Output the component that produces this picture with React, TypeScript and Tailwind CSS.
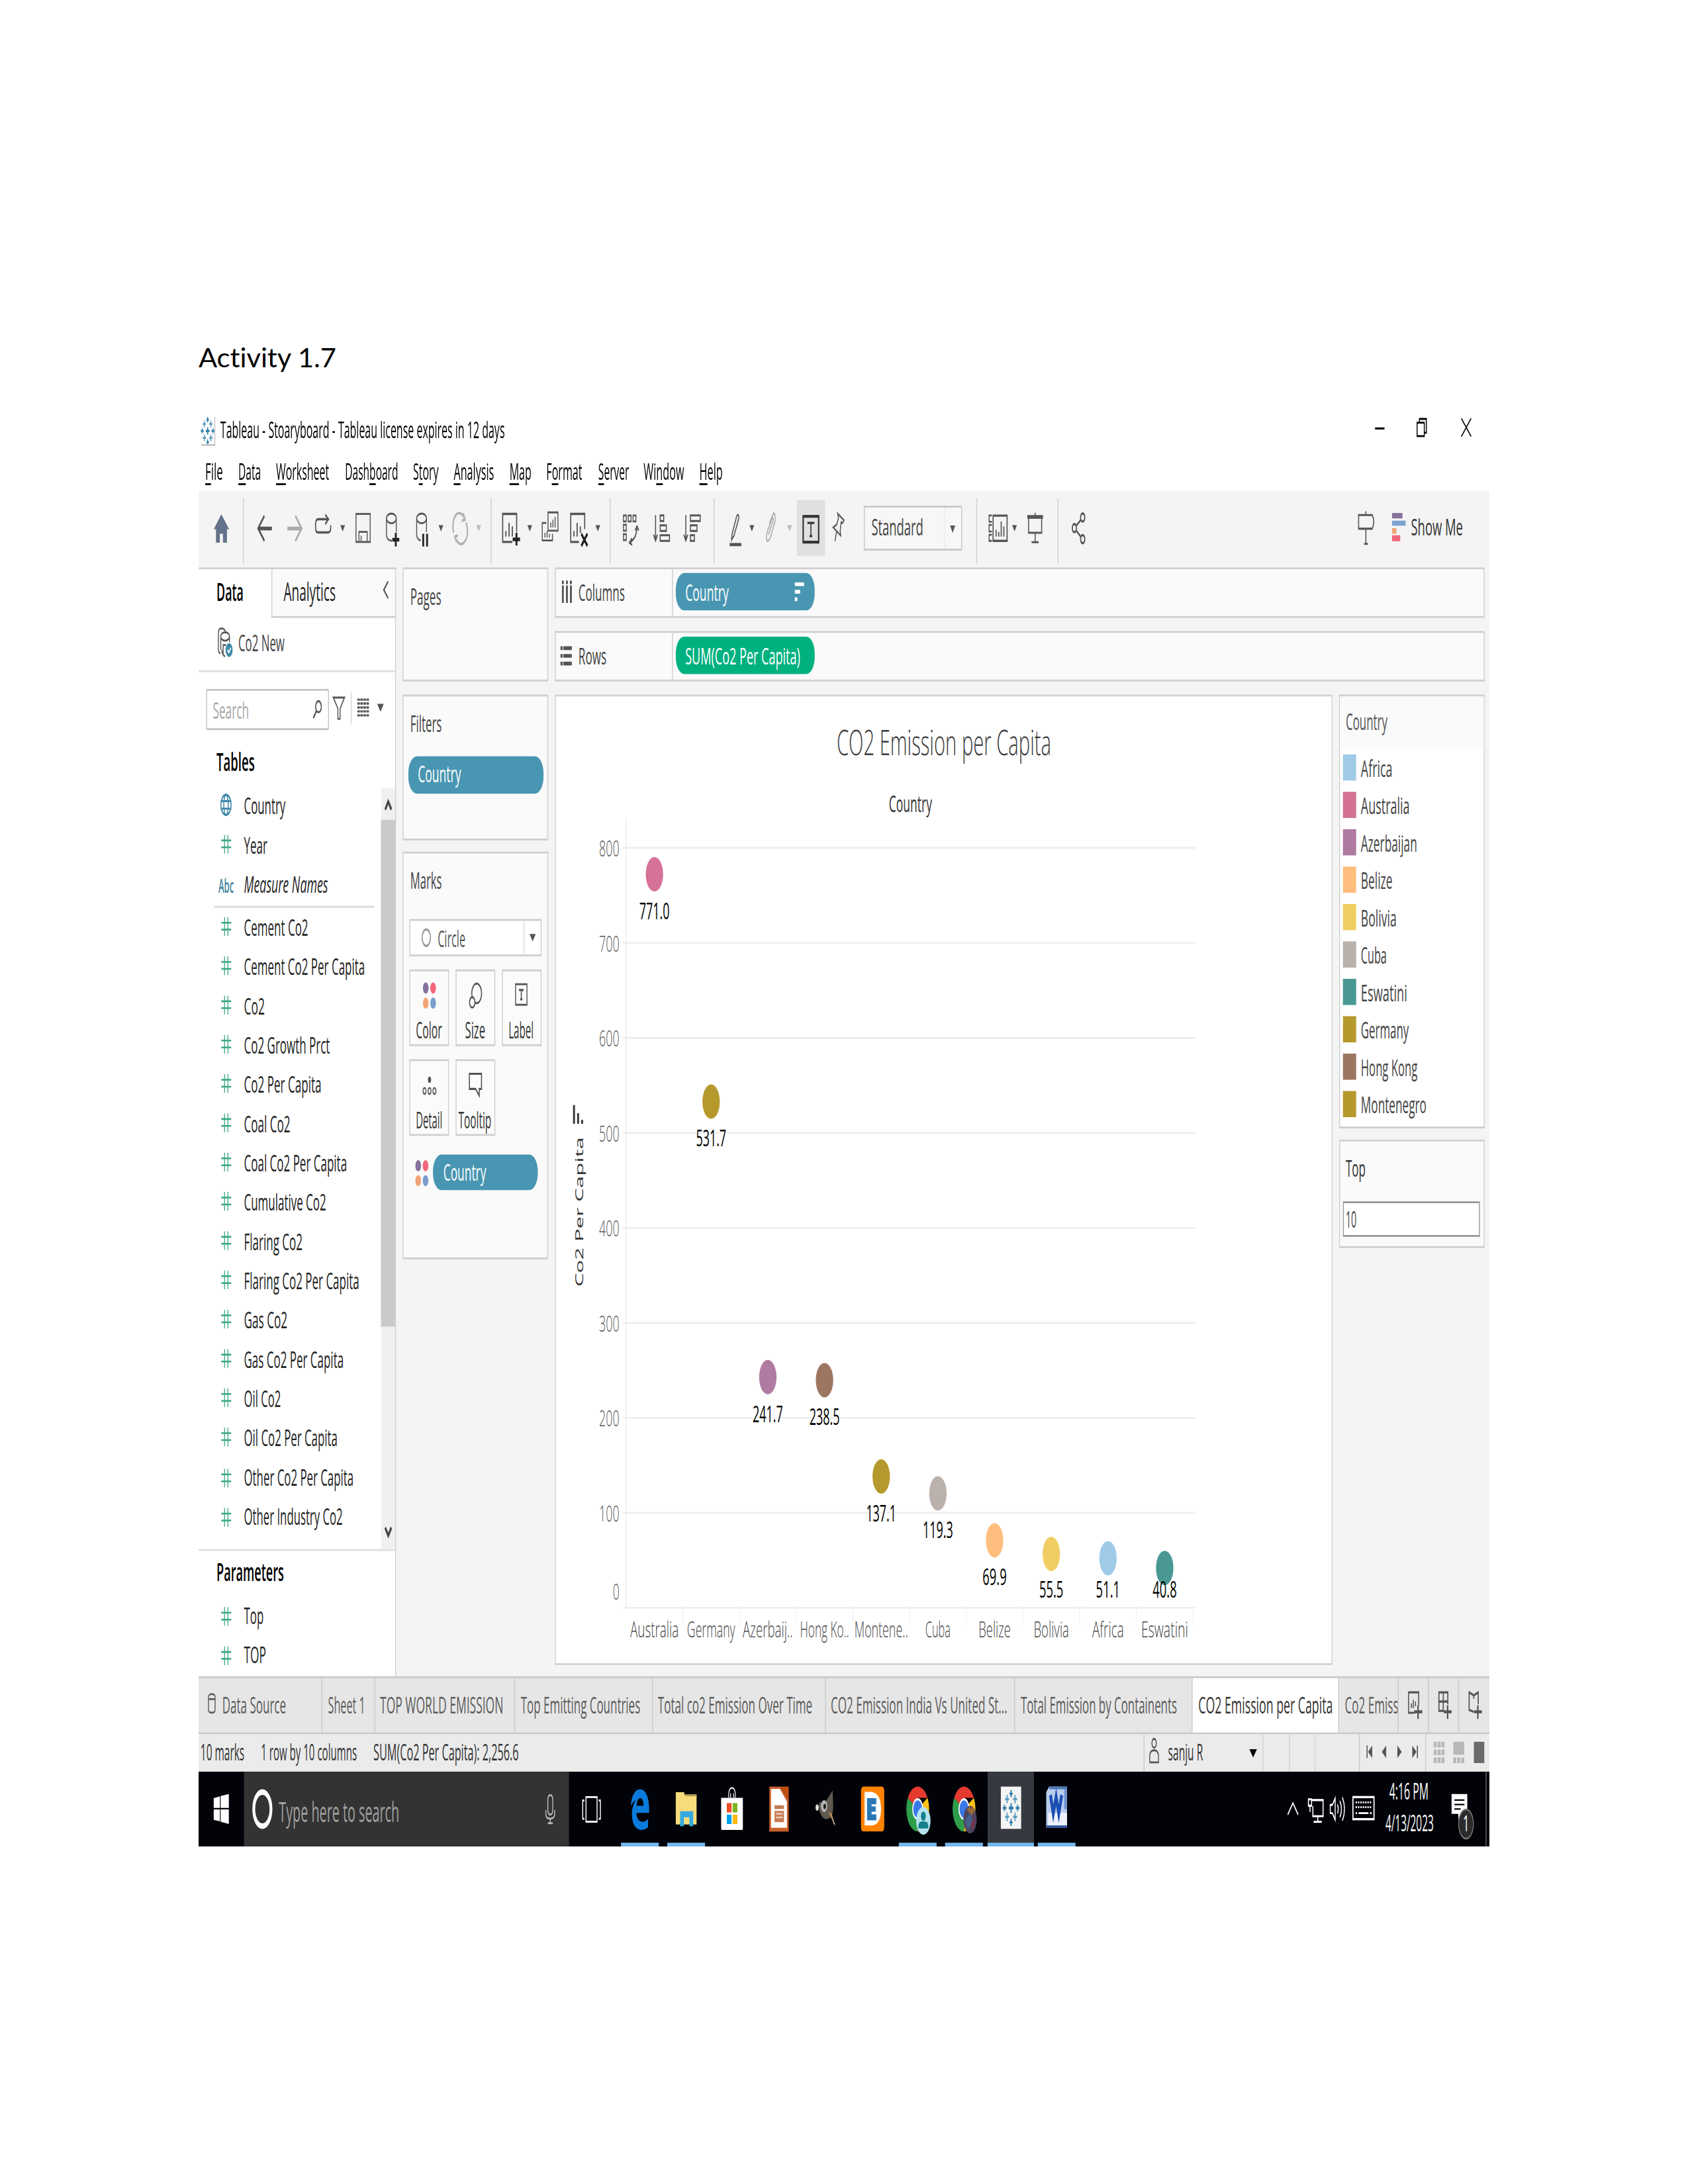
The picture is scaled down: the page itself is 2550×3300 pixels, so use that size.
import React, { useLayoutEffect, useRef, useState, type ReactNode } from "react";

/* Text set to a fixed advance width, condensed or widened to fill it. */
function T({ w, className = "", children }: { w: number; className?: string; children: ReactNode }) {
  const inner = useRef<HTMLSpanElement>(null);
  const [k, setK] = useState(1);
  useLayoutEffect(() => {
    if (inner.current) {
      const natural = parseFloat(getComputedStyle(inner.current).width);
      if (natural > 0) setK(w / natural);
    }
  }, [w]);
  return (
    <span className={`block shrink-0 whitespace-nowrap ${className}`} style={{ width: w }}>
      <span ref={inner} className="inline-block origin-left" style={{ transform: `scaleX(${k})` }}>
        {children}
      </span>
    </span>
  );
}

function Icon({ w, h = 20, className = "", children }: { w: number; h?: number; className?: string; children: ReactNode }) {
  return (
    <svg width={w} height={h} viewBox={`0 0 ${w} ${h}`} fill="none" stroke="currentColor" className={`block shrink-0 overflow-visible ${className}`}>
      {children}
    </svg>
  );
}

function Caret({ className = "" }: { className?: string }) {
  return (
    <Icon w={5} className={className}>
      <path d="M0 7.4H5L2.5 10.8Z" fill="currentColor" stroke="none" />
    </Icon>
  );
}

function Sep({ className = "" }: { className?: string }) {
  return <div className={`-mt-[7.8px] h-[35px] w-px shrink-0 bg-[#d0d0d0] ${className}`} />;
}

function TableauMark() {
  return (
    <g stroke="none">
      <g fill="#2f7fa8">
        <path d="M7 6h1.2v4H7zM5.6 7.4h4v1.2h-4z" />
        <path d="M7 .5h1.1v3H7zM6.2 1.6h2.8v.8H6.2zM7 12.5h1.1v3H7zM6.2 13.6h2.8v.8H6.2zM.3 7.5h3.2v1H.3zM1.4 6.6h.9v2.8h-.9zM11.6 7.5h3.2v1h-3.2zM12.8 6.6h.9v2.8h-.9z" />
      </g>
      <g fill="#5c9dbd">
        <path d="M3.6 2.5h1v3.6h-1zM2.4 3.8h3.4v1H2.4zM10.5 2.5h1v3.6h-1zM9.3 3.8h3.4v1H9.3zM3.6 9.9h1v3.6h-1zM2.4 11.2h3.4v1H2.4zM10.5 9.9h1v3.6h-1zM9.3 11.2h3.4v1H9.3z" />
      </g>
    </g>
  );
}

function TitleBar() {
  return (
    <div className="flex h-[22px] items-start text-[12px] leading-[16px] text-black">
      <Icon w={15.5} h={16} className="ml-[2.3px] mt-[3px]">
        <TableauMark />
        <path d="M15.2 .5V15.5H1" stroke="#bbb" strokeWidth={0.8} />
      </Icon>
      <T w={301} className="ml-[5.6px] mt-[3.2px]">Tableau - Stoaryboard - Tableau license expires in 12 days</T>
      <Icon w={10} h={12} className="ml-[921px] mt-[4px]">
        <path d="M0 5.7H10" stroke="#000" strokeWidth={1.1} />
      </Icon>
      <Icon w={11} h={11} className="ml-[34px] mt-[4px]">
        <path d="M3 2.4V.6H10.3V8H8.3" stroke="#000" />
        <rect x={0.5} y={2.6} width={7.6} height={7.2} stroke="#000" />
      </Icon>
      <Icon w={11} h={11} className="ml-[35.4px] mt-[4px]">
        <path d="M.3 .3L10.7 10M10.7 .3L.3 10" stroke="#000" strokeWidth={0.9} />
      </Icon>
    </div>
  );
}

const MENUS: [string, string, string, number][] = [
  ["", "F", "ile", 18.7],
  ["", "D", "ata", 24],
  ["", "W", "orksheet", 56.1],
  ["Dash", "b", "oard", 56.2],
  ["S", "t", "ory", 27],
  ["", "A", "nalysis", 42.6],
  ["", "M", "ap", 23.2],
  ["F", "o", "rmat", 38],
  ["", "S", "erver", 32.6],
  ["Wi", "n", "dow", 42.8],
  ["", "H", "elp", 24.7],
];

function MenuBar() {
  return (
    <div className="flex h-[20.5px] gap-[16.2px] pl-[7.4px] pt-[2px] text-[12px] leading-[17px] text-black">
      {MENUS.map(([a, u, b, w]) => (
        <T key={a + u + b} w={w}>
          {a}
          <span className="underline decoration-1 underline-offset-[1.5px]">{u}</span>
          {b}
        </T>
      ))}
    </div>
  );
}

function Toolbar() {
  return (
    <div className="flex h-[41.2px] items-start bg-[#f4f4f4] pt-[11.8px] text-[#555]">
      <Icon w={16.3} className="ml-[16.2px]">
        <path d="M8.1 1.6L16.3 9.6H14V16.8H9.8V12H6.5V16.8H2.4V9.6H0Z" fill="#62738a" stroke="none" />
      </Icon>
      <Sep className="ml-[15px]" />
      <Icon w={16} className="ml-[13.2px]">
        <path d="M1 9.2H15.6" strokeWidth={2} />
        <path d="M7.6 2.4L1 9.2L7.6 15.8" strokeWidth={1.5} />
      </Icon>
      <Icon w={16} className="ml-[15.9px] text-[#aaa]">
        <path d="M0 9.2H15" strokeWidth={2} />
        <path d="M8.4 2.4L15 9.2L8.4 15.8" strokeWidth={1.5} />
      </Icon>
      <Icon w={17.5} className="ml-[13.7px]">
        <path d="M14 4.2H3.5Q.8 4.2 .8 7V8.6Q.8 11.3 3.5 11.3H14Q16.8 11.3 16.8 8.6V7.5M11 1.8L14.4 4.2L11 6.8" strokeWidth={1.2} />
      </Icon>
      <Caret className="ml-[9.2px]" />
      <Icon w={16.3} className="ml-[10.8px]">
        <rect x={0.6} y={1.4} width={15} height={15} />
        <path d="M3.7 16V11H12.4V16M6 16V13" />
      </Icon>
      <Icon w={14.5} className="ml-[16.4px]">
        <ellipse cx={6} cy={3.8} rx={5.2} ry={2.6} />
        <path d="M.8 3.8V13Q1.6 15.5 6.5 15.8M11.2 3.8V11" />
        <path d="M10.7 11.5V18.8M7 15.2H14.4" stroke="#222" strokeWidth={2} />
      </Icon>
      <Icon w={13.4} className="ml-[16.6px]">
        <ellipse cx={6} cy={3.8} rx={5.2} ry={2.6} />
        <path d="M.8 3.8V13Q1.6 15.3 5 15.6M11.2 3.8V11" />
        <path d="M7.7 12V18.8M11.8 12V18.8" stroke="#222" strokeWidth={2} />
      </Icon>
      <Caret className="ml-[11.1px]" />
      <Icon w={17} className="ml-[8.5px] text-[#b0b0b0]">
        <path d="M2 11.5A6.7 7 0 0 1 12.5 3M15 6A6.7 7 0 0 1 4.6 15M12 1L14 4.5L10.5 5M5 16.5L3.2 13.5L6.5 13" strokeWidth={1.4} />
      </Icon>
      <Caret className="ml-[9.4px] text-[#bbb]" />
      <Sep className="ml-[10.5px]" />
      <Icon w={19.3} className="ml-[10.3px]">
        <path d="M11 16.4H.8V1.4H15.6V11" strokeWidth={1.2} />
        <path d="M4.2 10.5V13.5M7.6 6.2V13.5M11 8V13.5" strokeWidth={1.3} />
        <path d="M15.4 11.5V18.3M11.4 15H19.2" stroke="#222" strokeWidth={2} />
      </Icon>
      <Caret className="ml-[7.9px]" />
      <Icon w={18} className="ml-[10px]">
        <path d="M6.8 .6H17.3V10.4H6.8ZM5 6.2H.7V15.6H11.5V12" />
        <path d="M9.7 6V8.6M12 4.5V8.6M14.3 3V8.6M3.5 11.5V14M5.8 10.5V14M8.2 12V14" />
      </Icon>
      <Icon w={19} className="ml-[12px]">
        <path d="M9.5 16.4H.8V1.4H15.6V9.5" strokeWidth={1.2} />
        <path d="M4.2 10.5V13.5M7.6 6.2V13.5M11 8V11.5" strokeWidth={1.3} />
        <path d="M12 12L18.5 18.5M18.5 12L12 18.5" stroke="#222" strokeWidth={1.8} />
      </Icon>
      <Caret className="ml-[8px]" />
      <Sep className="ml-[10.5px]" />
      <Icon w={17} className="ml-[12.3px]">
        <path d="M.6 2.2H3.6V5.4H.6ZM5.7 2.2H8.7V5.4H5.7ZM10.8 2.2H13.8V5.4H10.8ZM.6 7.2H3.6V10.4H.6ZM.6 12.2H3.6V15.4H.6Z" />
        <path d="M14.8 8.5Q15 14 8 16.6M13 10.2L14.9 8L16.8 10.2M9.8 14.4L7 16.8L9.8 18" strokeWidth={1.1} />
      </Icon>
      <Icon w={18} className="ml-[15.6px]">
        <path d="M2.6 2V15.5M.5 12.5L2.6 15.7L4.7 12.5M7.5 2.2H11.2V5.2H7.5ZM7.5 7.5H14V10.5H7.5ZM7.5 12.8H17.3V15.8H7.5Z" strokeWidth={1.1} />
      </Icon>
      <Icon w={18.5} className="ml-[13.6px]">
        <path d="M2.6 2V15.5M.5 12.5L2.6 15.7L4.7 12.5M7.5 2.2H17.8V5.2H7.5ZM7.5 7.5H14.5V10.5H7.5ZM7.5 12.8H11.7V15.8H7.5Z" strokeWidth={1.1} />
      </Icon>
      <Sep className="ml-[13.7px]" />
      <Icon w={12.4} className="ml-[15.8px]">
        <path d="M7.6 2.4L2.6 12L2 15.2L4.6 13L9.9 3.4Q9.4 1 7.6 2.4Z" />
        <path d="M0 17.8H12.4" strokeWidth={1.7} />
      </Icon>
      <Caret className="ml-[8.6px]" />
      <Icon w={11} className="ml-[11.8px] text-[#aaa]">
        <path d="M3 12.5L8 5Q8.5 3.5 7.2 3.4L2 10.6Q-.2 15 2 16Q4 16 6 12.5L10.2 5.2Q10.8 1.4 8.5 1L4 6.5" />
      </Icon>
      <Caret className="ml-[12.4px] text-[#bbb]" />
      <div className="-mt-[5.9px] ml-[4.8px] flex h-[29.5px] w-[30.5px] shrink-0 items-center justify-center bg-[#e0e0e0]">
        <Icon w={18} h={15.2} className="text-[#333]">
          <rect x={0.8} y={0.7} width={16.4} height={13.8} strokeWidth={1.5} />
          <path d="M5.3 4.2H12.7M9 4.2V11.3M7.6 11.3H10.4" strokeWidth={1.1} />
        </Icon>
      </div>
      <Icon w={12.4} className="ml-[7.8px]">
        <path d="M5.3 1.2L12 4.8L10.4 6.4L9 5.8L8 10.5L8.6 13L.6 8.6L4.4 7L6.2 3.6ZM4.2 11L2.4 16" />
      </Icon>
      <div className="-mt-[3.2px] ml-[20.3px] flex h-[23.4px] w-[104.6px] shrink-0 items-center border border-[#c8c8c8] bg-[#f7f7f7] pl-[7.4px]">
        <T w={55} className="text-[12px] leading-[17px] text-[#444]">Standard</T>
        <div className="ml-[21.5px] h-full w-px bg-[#ececec]" />
        <Icon w={6} h={20} className="ml-[5.5px]">
          <path d="M.3 8.6H5.7L3 12.6Z" fill="currentColor" stroke="none" />
        </Icon>
      </div>
      <Sep className="ml-[14.7px]" />
      <Icon w={20.3} className="ml-[11.7px]">
        <path d="M4.8 2.3H19.6V15.8H4.8ZM8 10V13.5M10.8 11V13.5M13.4 5.5V13.5M16.2 8V13.5" strokeWidth={1.2} />
        <path d="M3.4 2.2H.6V5.6H3.4M3.4 7.3H.6V10.8H3.4M3.4 12.6H.6V15.8H3.4" />
      </Icon>
      <Caret className="ml-[4.7px]" />
      <Icon w={16.6} className="ml-[11px]">
        <path d="M0 3H16.6" strokeWidth={2} />
        <path d="M1.4 3.6V11.5H15.2V3.6M8.3 .8V3M8.3 11.5V16M4.5 16.5H12" strokeWidth={1.1} />
      </Icon>
      <Sep className="ml-[15.7px]" />
      <Icon w={14.5} className="ml-[14.4px]">
        <circle cx={2.8} cy={9} r={2.2} strokeWidth={1.2} />
        <circle cx={11.6} cy={3.3} r={2.2} strokeWidth={1.2} />
        <circle cx={11.6} cy={14.9} r={2.2} strokeWidth={1.2} />
        <path d="M4.6 7.8L9.8 4.5M4.6 10.3L9.8 13.7" strokeWidth={1.2} />
      </Icon>
      <Icon w={18.2} className="ml-[287.6px]">
        <path d="M.6 2H15Q18.4 5.5 15 9.3H.6ZM8.3 0V2M8.3 9.3V17.4M6.5 17.4H10.5" strokeWidth={1.1} />
      </Icon>
      <Icon w={14.4} className="ml-[18.4px]">
        <g stroke="none">
          <path d="M0 .9H11V3.8H0Z" fill="#85719a" />
          <path d="M0 5H14.4V7.7H0Z" fill="#7ba3d0" />
          <path d="M0 9H4.6V12H0Z" fill="#f4a777" />
          <path d="M0 12.8H8.6V16H0Z" fill="#f3667c" />
        </g>
      </Icon>
      <T w={55} className="-mt-[.4px] ml-[5.8px] text-[12.5px] leading-[18px] text-[#333]">Show Me</T>
    </div>
  );
}

function Hash({ className = "" }: { className?: string }) {
  return (
    <Icon w={10.5} h={10} className={`text-[#3aa882] ${className}`}>
      <path d="M0 3H10.5M0 6.7H10.5" strokeWidth={0.9} />
      <path d="M3.5 0V10M7 0V10" strokeWidth={0.9} />
    </Icon>
  );
}

const FIELDS: [string, number][] = [
  ["Cement Co2", 68],
  ["Cement Co2 Per Capita", 128],
  ["Co2", 22],
  ["Co2 Growth Prct", 91],
  ["Co2 Per Capita", 82],
  ["Coal Co2", 49],
  ["Coal Co2 Per Capita", 109],
  ["Cumulative Co2", 87],
  ["Flaring Co2", 62],
  ["Flaring Co2 Per Capita", 122],
  ["Gas Co2", 46],
  ["Gas Co2 Per Capita", 105.5],
  ["Oil Co2", 39],
  ["Oil Co2 Per Capita", 99],
  ["Other Co2 Per Capita", 116],
  ["Other Industry Co2", 104.5],
];

function FieldRow({ name, w }: { name: string; w: number }) {
  return (
    <div className="flex h-[21.03px] items-center">
      <Hash className="ml-[23.8px]" />
      <T w={w} className="ml-[13.4px] leading-[17px]">{name}</T>
    </div>
  );
}

function Sidebar() {
  return (
    <div className="flex h-full w-[209.3px] shrink-0 flex-col border-r border-t border-[#cfcfcf] bg-white text-[12px] text-[#222]">
      <div className="flex h-[26px] shrink-0">
        <T w={28.5} className="ml-[18.5px] mt-[3.2px] text-[13.5px] font-semibold leading-[18px] text-black">Data</T>
        <div className="ml-[30px] flex h-full flex-1 border-b border-l border-[#cfcfcf] bg-[#fafafa]">
          <T w={55} className="ml-[11.8px] mt-[3.2px] text-[13.5px] leading-[18px]">Analytics</T>
          <Icon w={6} h={10} className="ml-[50.6px] mt-[6.8px] text-[#555]">
            <path d="M5.6 .5L1 5L5.6 9.5" strokeWidth={1.2} />
          </Icon>
        </div>
      </div>
      <div className="flex h-[29.8px] shrink-0 border-b border-[#dedede] pl-[20px] pt-[5.8px]">
        <Icon w={16} h={16} className="text-[#555]">
          <path d="M1 12.5V3Q1 .7 4 .6Q7.5 .6 8.5 2.5M1 12.5Q1.5 13.8 3 14M3.5 12V5Q3.5 2.8 8 2.7Q12.7 2.8 12.7 5V8M3.5 5.5Q5 7.2 8 7.2Q11 7.2 12.5 5.6M5.5 9.5H9M4.5 12Q5 15 8 15.5M6 9V15" />
          <circle cx={12.3} cy={12.2} r={3.7} fill="#3d8ba8" stroke="none" />
          <path d="M10.6 12L12 13.5L14.2 11" stroke="#fff" />
        </Icon>
        <T w={49} className="ml-[6px] -mt-[.6px] leading-[17px] text-[#444]">Co2 New</T>
      </div>
      <div className="mt-[8.1px] flex h-[22.7px] shrink-0 pl-[8.3px]">
        <div className="flex w-[129.6px] items-center rounded-[1px] border border-[#c4c4c4] bg-white">
          <T w={38.3} className="ml-[6.2px] pt-[.6px] leading-[17px] text-[#a6a6a6]">Search</T>
          <Icon w={9.5} h={10} className="ml-[67.4px] text-[#555]">
            <circle cx={5.9} cy={3.5} r={3} strokeWidth={1.1} />
            <path d="M3.7 5.8L.4 9.6" strokeWidth={1.3} />
          </Icon>
        </div>
        <Icon w={13} h={13} className="ml-[4.2px] mt-[4.8px] text-[#555]">
          <path d="M.6 .6H12.4L7.7 6.5V12H5.4V6.5Z" />
        </Icon>
        <div className="ml-[6px] mt-[2.2px] h-[17.4px] w-px bg-[#d4d4d4]" />
        <Icon w={12.4} h={10} className="ml-[5.7px] mt-[5.4px] text-[#555]">
          <path d="M0 .7H12.4M0 2.8H12.4M0 4.9H12.4M0 7H12.4M0 9.1H12.4" strokeWidth={1.2} strokeDasharray="2.7 .5" />
        </Icon>
        <Icon w={7} h={5} className="ml-[9px] mt-[8.7px] text-[#555]">
          <path d="M0 0H7L3.5 4.2Z" fill="currentColor" stroke="none" />
        </Icon>
      </div>
      <T w={40.3} className="ml-[18.5px] mt-[7.5px] h-[20px] text-[13.5px] font-semibold leading-[18px] text-black">Tables</T>
      <div className="mt-[2px] flex h-[408.8px] shrink-0 border-b border-[#dedede]">
        <div className="w-[193.4px]">
          <div className="flex h-[21px] items-center">
            <Icon w={12} h={12} className="ml-[22.8px] text-[#3c86a8]">
              <circle cx={6} cy={6} r={5.4} strokeWidth={1.1} />
              <ellipse cx={6} cy={6} rx={2.4} ry={5.4} />
              <path d="M.6 4H11.4M.6 8H11.4" />
            </Icon>
            <T w={44} className="ml-[12.9px] leading-[17px]">Country</T>
          </div>
          <FieldRow name="Year" w={24.8} />
          <div className="flex h-[21px] items-center">
            <T w={16.3} className="ml-[21px] pt-px text-[10px] font-semibold leading-[16px] text-[#3f8299]">Abc</T>
            <T w={89} className="ml-[10.7px] italic leading-[17px]">Measure Names</T>
          </div>
          <div className="ml-[15.5px] mt-px h-px w-[170px] bg-[#dcdcdc]" />
          {FIELDS.map(([name, w]) => (
            <FieldRow key={name} name={name} w={w} />
          ))}
        </div>
        <div className="mt-[.8px] flex h-[407px] w-[14.8px] flex-col items-center bg-[#f0f0f0]">
          <Icon w={7.5} h={17} className="text-[#444]">
            <path d="M.5 11.5L3.7 7.2L7 11.5" strokeWidth={1.9} />
          </Icon>
          <div className="h-[271.6px] w-full bg-[#cacaca]" />
          <Icon w={7.5} h={17} className="mt-[102px] text-[#444]">
            <path d="M.5 5.5L3.7 9.8L7 5.5" strokeWidth={1.9} />
          </Icon>
        </div>
      </div>
      <T w={71.3} className="ml-[18.5px] mt-[2.6px] h-[22px] text-[13.5px] font-semibold leading-[18px] text-black">Parameters</T>
      <FieldRow name="Top" w={20.8} />
      <FieldRow name="TOP" w={23.5} />
    </div>
  );
}

function Dots({ className = "" }: { className?: string }) {
  return (
    <Icon w={14.3} h={14} className={className}>
      <g stroke="none">
        <circle cx={3.4} cy={3} r={3} fill="#85719f" />
        <circle cx={11.2} cy={3} r={3} fill="#f3667c" />
        <circle cx={3.4} cy={11} r={3} fill="#f2a476" />
        <circle cx={11.2} cy={11} r={3} fill="#7b9fcc" />
      </g>
    </Icon>
  );
}

function MarkButton({ label, w, children }: { label: string; w: number; children: ReactNode }) {
  return (
    <div className="flex h-[41.5px] w-[42px] flex-col items-center border border-[#cfcfcf] bg-[#fbfbfb]">
      <div className="flex h-[24px] items-center pt-[1.6px] text-[#555]">{children}</div>
      <T w={w} className="mt-[1.3px] leading-[14px] text-[#333]">{label}</T>
    </div>
  );
}

function Shelves() {
  return (
    <div className="ml-[6.6px] flex w-[153.8px] shrink-0 flex-col text-[12px] leading-[17px] text-[#444]">
      <div className="h-[61.6px] border border-[#cfcfcf] bg-[#fafafa] pl-[7px] pt-[6.1px]">
        <T w={32.8}>Pages</T>
      </div>
      <div className="mt-[6.6px] h-[77.9px] border border-[#cfcfcf] bg-[#fafafa] pl-[4.8px] pt-[6px]">
        <T w={33.3} className="ml-[2.2px]">Filters</T>
        <div className="mt-[8.8px] flex h-[20px] w-[143.4px] items-center rounded-[9px] bg-[#4996b2]">
          <T w={45.8} className="ml-[10.2px] font-medium text-white">Country</T>
        </div>
      </div>
      <div className="mt-[6.2px] h-[217.6px] border border-[#cfcfcf] bg-[#fafafa] pl-[6.3px] pt-[5.8px]">
        <T w={33.3} className="ml-[.7px]">Marks</T>
        <div className="mt-[12.2px] flex h-[20.4px] w-[139.4px] items-center border border-[#cfcfcf] bg-white">
          <Icon w={10} h={10.5} className="ml-[12px] text-[#999]">
            <circle cx={5} cy={5} r={4.4} strokeWidth={1.2} />
          </Icon>
          <T w={29.3} className="ml-[7px] mt-px text-[#555]">Circle</T>
          <div className="ml-[62px] h-full w-px bg-[#ddd]" />
          <Icon w={7} h={5} className="ml-[5px] mt-[1.2px] text-[#555]">
            <path d="M.2 0H6.8L3.5 4Z" fill="currentColor" stroke="none" />
          </Icon>
        </div>
        <div className="mt-[6.6px] grid w-[139.4px] grid-cols-[42px_42px_42px] justify-between gap-y-[6.3px]">
          <MarkButton label="Color" w={27.5}>
            <Dots className="-ml-[1px]" />
          </MarkButton>
          <MarkButton label="Size" w={21.3}>
            <Icon w={14} h={14}>
              <circle cx={8.3} cy={5.8} r={5.2} strokeWidth={1.1} />
              <circle cx={3.6} cy={10.6} r={2.8} fill="#fbfbfb" strokeWidth={1.1} />
            </Icon>
          </MarkButton>
          <MarkButton label="Label" w={26.5}>
            <Icon w={13} h={12.5}>
              <rect x={0.5} y={0.9} width={12} height={11} />
              <path d="M4 4H9M6.5 4V9M5.3 9H7.7" strokeWidth={1.1} />
            </Icon>
          </MarkButton>
          <MarkButton label="Detail" w={28}>
            <Icon w={14.5} h={12} className="mt-[2px]">
              <circle cx={7.4} cy={2} r={1.7} fill="currentColor" stroke="none" />
              <circle cx={2.1} cy={8} r={1.6} />
              <circle cx={7.4} cy={8} r={1.6} />
              <circle cx={12.6} cy={8} r={1.6} />
            </Icon>
          </MarkButton>
          <MarkButton label="Tooltip" w={34.8}>
            <Icon w={14} h={13} className="mt-[.6px]">
              <path d="M.6 .8H13.4V8.9H11V12.6L7.2 8.9H.6Z" strokeWidth={1.1} />
            </Icon>
          </MarkButton>
        </div>
        <div className="mt-[9.4px] flex h-[19.8px] items-center">
          <Dots className="ml-[6.2px]" />
          <div className="ml-[4.2px] flex h-full w-[111.6px] items-center rounded-[9px] bg-[#4996b2]">
            <T w={45.3} className="ml-[11.3px] font-medium text-white">Country</T>
          </div>
        </div>
      </div>
    </div>
  );
}

function ColumnsRows() {
  return (
    <div className="flex flex-col gap-[6.6px] text-[12.5px] leading-[17px] text-[#444]">
      <div className="flex h-[27.5px] border border-[#cfcfcf] bg-[#fafafa]">
        <div className="flex w-[124.4px] items-center border-r border-[#cfcfcf]">
          <Icon w={11.4} h={12} className="ml-[6px] -mt-[1px] text-[#555]">
            <path d="M1.5 0V12M5.8 0V12M10 0V12" strokeWidth={2} />
            <path d="M0 2.3H11.4" stroke="#fafafa" strokeWidth={0.7} />
          </Icon>
          <T w={49} className="ml-[7.4px]">Columns</T>
        </div>
        <div className="ml-[2.6px] mt-[2.7px] flex h-[19.9px] w-[147.8px] items-center rounded-[9px] bg-[#4996b2]">
          <T w={46} className="ml-[10.3px] text-[12px] font-medium text-white">Country</T>
          <Icon w={10} h={10} className="ml-[69.8px] text-white">
            <path d="M0 1H9.8M0 5H5.6M0 9H2.6" strokeWidth={2} />
          </Icon>
        </div>
      </div>
      <div className="flex h-[27.5px] border border-[#cfcfcf] bg-[#fafafa]">
        <div className="flex w-[124.4px] items-center border-r border-[#cfcfcf]">
          <Icon w={12} h={10.6} className="ml-[5.6px] -mt-[1px] text-[#555]">
            <path d="M0 1.2H12M0 5.3H12M0 9.4H12" strokeWidth={2} />
            <path d="M2.6 0V10.6" stroke="#fafafa" strokeWidth={0.7} />
          </Icon>
          <T w={29.6} className="ml-[7.2px]">Rows</T>
        </div>
        <div className="ml-[2.6px] mt-[2.6px] flex h-[20.1px] w-[147.8px] items-center rounded-[9px] bg-[#00b180]">
          <T w={121.7} className="ml-[10.3px] text-[12px] font-medium text-white">SUM(Co2 Per Capita)</T>
        </div>
      </div>
    </div>
  );
}

type Mark = { label: string; value: string; color: string; lw: number; vw: number };

const MARKS: Mark[] = [
  { label: "Australia", value: "771.0", color: "#d6719a", lw: 51.4, vw: 32 },
  { label: "Germany", value: "531.7", color: "#b6992d", lw: 51, vw: 32 },
  { label: "Azerbaij..", value: "241.7", color: "#b07aa1", lw: 53, vw: 32 },
  { label: "Hong Ko..", value: "238.5", color: "#9d7660", lw: 52, vw: 32 },
  { label: "Montene..", value: "137.1", color: "#b6992d", lw: 56.7, vw: 32 },
  { label: "Cuba", value: "119.3", color: "#bab0ac", lw: 26.8, vw: 32 },
  { label: "Belize", value: "69.9", color: "#ffbe7d", lw: 34, vw: 25.5 },
  { label: "Bolivia", value: "55.5", color: "#f1ce63", lw: 37.5, vw: 25.5 },
  { label: "Africa", value: "51.1", color: "#a0cbe8", lw: 33.5, vw: 25.5 },
  { label: "Eswatini", value: "40.8", color: "#499894", lw: 49.6, vw: 25.5 },
];

const scaleY = (v: number) => 640.3 - v * 0.508;

function Chart() {
  return (
    <div className="mt-[6.8px] h-[518.8px] w-[823.3px] border border-[#d2d2d2] bg-white">
      <svg viewBox="377.7 153 821.3 516.6" className="block h-full w-full" fill="#333">
        <text x={788.5} y={184.4} fontSize={19} fontWeight={300} textAnchor="middle" textLength={227} lengthAdjust="spacingAndGlyphs" fill="#3a3a3a">
          CO2 Emission per Capita
        </text>
        <text x={753} y={214.6} fontSize={12} textAnchor="middle" textLength={45.7} lengthAdjust="spacingAndGlyphs">
          Country
        </text>
        {[800, 700, 600, 500, 400, 300, 200, 100, 0].map((v) => (
          <g key={v}>
            <path d={`M448.5 ${scaleY(v)}H1054.6`} stroke={v === 0 ? "#e9e9e9" : "#eeeeee"} strokeWidth={v === 0 ? 0.7 : 1} />
            <text
              x={445}
              y={v === 0 ? 635.8 : scaleY(v) + 4.6}
              fontSize={12}
              fontWeight={300}
              textAnchor="end"
              textLength={v === 0 ? 7 : 21.4}
              lengthAdjust="spacingAndGlyphs"
              fill="#555"
            >
              {v}
            </text>
          </g>
        ))}
        <path d="M452.2 218V640.3" stroke="#e9e9e9" strokeWidth={0.8} />
        {MARKS.map((m, i) => {
          const x = 482.1 + i * 60;
          const y = scaleY(parseFloat(m.value)) - 0.6;
          return (
            <g key={m.label}>
              <path d={`M${x + 30} 640.3V650`} stroke="#f2f2f2" strokeWidth={0.8} />
              <circle cx={x} cy={y} r={9.2} fill={m.color} />
              <text x={x} y={Math.min(y + 24, 635)} fontSize={12} textAnchor="middle" textLength={m.vw} lengthAdjust="spacingAndGlyphs" fill="#000" stroke="#fff" strokeWidth={m.label === "Eswatini" ? 0 : 1.5} paintOrder="stroke">
                {m.value}
              </text>
              <text x={x} y={656.1} fontSize={12} fontWeight={300} textAnchor="middle" textLength={m.lw} lengthAdjust="spacingAndGlyphs" fill="#444">
                {m.label}
              </text>
            </g>
          );
        })}
        <text transform="translate(406.6 468.6) rotate(-90)" fontSize={12} fontWeight={500} textLength={80} lengthAdjust="spacingAndGlyphs">
          Co2 Per Capita
        </text>
        <path d="M397 371.4V381.4M401.3 375.8V381.4M405.6 379.4V381.4" stroke="#333" strokeWidth={2} />
      </svg>
    </div>
  );
}

const LEGEND: [string, string, number][] = [
  ["Africa", "bg-[#a0cbe8]", 33.4],
  ["Australia", "bg-[#d37295]", 51.6],
  ["Azerbaijan", "bg-[#b07aa1]", 59.5],
  ["Belize", "bg-[#ffbe7d]", 33.4],
  ["Bolivia", "bg-[#f1ce63]", 37.8],
  ["Cuba", "bg-[#bab0ac]", 27.3],
  ["Eswatini", "bg-[#499894]", 49],
  ["Germany", "bg-[#b6992d]", 50.7],
  ["Hong Kong", "bg-[#9d7660]", 59.8],
  ["Montenegro", "bg-[#b6992d]", 69.4],
];

function Legend() {
  return (
    <div className="ml-[6.8px] mt-[6.4px] w-[153.8px] text-[12px] leading-[17px] text-[#444]">
      <div className="h-[232px] border border-[#cfcfcf] bg-white">
        <div className="h-[28.6px] bg-[#fafafa] pl-[6px] pt-[5.8px]">
          <T w={44.1} className="text-[#555]">Country</T>
        </div>
        <div className="flex flex-col pl-[2.9px]">
          {LEGEND.map(([name, color, w]) => (
            <div key={name} className="flex h-[20.02px] items-center">
              <div className={`h-[14px] w-[14px] ${color}`} />
              <T w={w} className="ml-[5.2px] mt-[.8px]">{name}</T>
            </div>
          ))}
        </div>
      </div>
      <div className="mt-[6.6px] h-[57.4px] border border-[#cfcfcf] bg-[#fafafa] px-[2.9px] pt-[5.6px]">
        <T w={21} className="ml-[3.1px] text-[#333]">Top</T>
        <div className="mt-[8.8px] flex h-[19.8px] w-[145.5px] items-center border border-[#999] bg-white">
          <T w={11.4} className="ml-[2.2px]">10</T>
        </div>
      </div>
    </div>
  );
}

function SheetTab({ className = "", children }: { className?: string; children: ReactNode }) {
  return <div className={`flex h-full shrink-0 items-center overflow-hidden border-r border-[#c9c9c9] ${className}`}>{children}</div>;
}

function SheetTabs() {
  return (
    <div className="flex h-[30.5px] border-y border-[#c9c9c9] bg-[#e6e6e6] text-[12px] leading-[17px] text-[#5c5c5c]">
      <SheetTab className="w-[131px] pl-[10px]">
        <Icon w={8} h={11} className="-mt-[3px]">
          <path d="M.5 2.2V9Q.5 10.4 4 10.5Q7.5 10.4 7.5 9V2.2Q7.5 .6 4 .5Q.5 .6 .5 2.2ZM.5 3.2H7.5" />
        </Icon>
        <T w={67.5} className="ml-[6.7px]">Data Source</T>
      </SheetTab>
      <SheetTab className="w-[56px] pl-[6.3px]"><T w={39.3}>Sheet 1</T></SheetTab>
      <SheetTab className="w-[148.2px] pl-[5.3px]"><T w={130.5}>TOP WORLD EMISSION</T></SheetTab>
      <SheetTab className="w-[146.2px] pl-[5.4px]"><T w={126.4}>Top Emitting Countries</T></SheetTab>
      <SheetTab className="w-[182.7px] pl-[4.9px]"><T w={163.5}>Total co2 Emission Over Time</T></SheetTab>
      <SheetTab className="w-[199.9px] pl-[4.9px]"><T w={186.9}>CO2 Emission India Vs United St...</T></SheetTab>
      <SheetTab className="w-[188.1px] pl-[6px]"><T w={165.4}>Total Emission by Containents</T></SheetTab>
      <SheetTab className="w-[154.6px] bg-white pl-[5.7px]"><T w={142.2} className="-mt-px font-medium text-[#333]">CO2 Emission per Capita</T></SheetTab>
      <SheetTab className="w-[63.2px] pl-[6.3px]"><T w={56.7}>Co2 Emiss</T></SheetTab>
      <SheetTab className="w-[32px] pl-[9.8px] text-[#555]">
        <Icon w={15} h={15}>
          <path d="M7 11.5H.5V.6H11.2V7.5M3.5 6.5V9M5.5 4.5V9M7.8 5.5V8" strokeWidth={1.1} />
          <path d="M10.5 7.5V14.8M6.4 11H15" strokeWidth={1.6} />
        </Icon>
      </SheetTab>
      <SheetTab className="w-[31.9px] pl-[10.2px] text-[#555]">
        <Icon w={15} h={15}>
          <path d="M6 10.5H.6V.6H10V7M.6 5.5H10M5.2 .6V10.5" strokeWidth={1.2} />
          <path d="M9.8 7.5V14.8M5.8 11H14" strokeWidth={1.6} />
        </Icon>
      </SheetTab>
      <div className="flex items-center pl-[10.5px] text-[#555]">
        <Icon w={15} h={15}>
          <path d="M5.4 11L.6 10V.6L5.5 2.2L10.2 .6V7M5.5 2.2V4" strokeWidth={1.2} />
          <path d="M9.8 7.5V14.8M5.8 11H14" strokeWidth={1.6} />
        </Icon>
      </div>
    </div>
  );
}

function StatusBar() {
  return (
    <div className="flex h-[20.2px] bg-[#ebebeb] text-[12px] leading-[17px] text-[#333]">
      <T w={46.5} className="ml-[2.4px] mt-[1.2px]">10 marks</T>
      <T w={101.5} className="ml-[16.9px] mt-[1.2px]">1 row by 10 columns</T>
      <T w={153.8} className="ml-[17.7px] mt-[1.2px]">SUM(Co2 Per Capita): 2,256.6</T>
      <div className="ml-[660.8px] h-full w-px bg-[#c9c9c9]" />
      <Icon w={10.4} h={14} className="ml-[5.9px] mt-[1.8px] text-[#555]">
        <ellipse cx={5.2} cy={2.8} rx={2.3} ry={2.4} />
        <path d="M.6 13V9.5Q.8 6.6 5.2 6.5Q9.6 6.6 9.8 9.5V13Z" />
      </Icon>
      <T w={36.9} className="ml-[9.4px] mt-[1.2px]">sanju R</T>
      <Icon w={8} h={5} className="ml-[48.8px] mt-[8.1px] text-black">
        <path d="M0 0H8L4 4.4Z" fill="currentColor" stroke="none" />
      </Icon>
      <div className="ml-[6.4px] h-full w-px bg-[#d4d4d4]" />
      <div className="ml-[26.3px] h-full w-px bg-[#d4d4d4]" />
      <div className="ml-[25.9px] h-full w-px bg-[#d4d4d4]" />
      <div className="ml-[46px] h-full w-px bg-[#c9c9c9]" />
      <Icon w={55} h={7} className="ml-[7.6px] mt-[6.3px] text-[#555]">
        <path d="M.6 0V6.8M53.8 0V6.8" strokeWidth={1.1} />
        <path d="M6 0V6.8L1.6 3.4ZM20.8 0V6.8L16.2 3.4ZM32.6 0V6.8L37.2 3.4ZM48.4 0V6.8L52.8 3.4Z" fill="currentColor" stroke="none" />
      </Icon>
      <div className="ml-[7.4px] h-full w-px bg-[#c9c9c9]" />
      <Icon w={54} h={11.5} className="ml-[7.4px] mt-[4px]">
        <g stroke="none" fill="#b8b8b8">
          <path d="M0 0H3.2V3H0ZM4.1 0H7.4V3H4.1ZM8.3 0H11.5V3H8.3ZM0 4.2H3.2V7.2H0ZM4.1 4.2H7.4V7.2H4.1ZM8.3 4.2H11.5V7.2H8.3ZM0 8.4H3.2V11.4H0ZM4.1 8.4H7.4V11.4H4.1ZM8.3 8.4H11.5V11.4H8.3Z" />
          <path d="M20.8 0H32.4V7H20.8ZM20.8 8.4H24V11.4H20.8ZM25 8.4H28.2V11.4H25ZM29.2 8.4H32.4V11.4H29.2Z" />
          <path d="M42.6 0H53.6V11.4H42.6Z" fill="#6a6a6a" />
        </g>
      </Icon>
    </div>
  );
}

function TaskButton({ className = "", open = false, active = false, children }: { className?: string; open?: boolean; active?: boolean; children: ReactNode }) {
  return (
    <div className={`flex h-full shrink-0 flex-col justify-between ${active ? "bg-[#36393f]" : ""} ${className}`}>
      <div className="flex h-[37.9px] items-start justify-center pt-[7.8px]">{children}</div>
      <div className={`h-[1.9px] w-full ${open ? "bg-[#76b9ed]" : ""}`} />
    </div>
  );
}

function Chrome() {
  return (
    <g stroke="none">
      <path d="M13 12L23.4 6A12 12 0 0 1 13 24Z" fill="#fbc116" />
      <path d="M13 12L13 24A12 12 0 0 1 2.6 6Z" fill="#2d9d4a" />
      <path d="M13 12L2.6 6A12 12 0 0 1 23.4 6H13Z" fill="#e53a30" />
      <circle cx={13} cy={12} r={5.8} fill="#fff" />
      <circle cx={13} cy={12} r={4.7} fill="#3b78e7" />
    </g>
  );
}

function Taskbar() {
  return (
    <div className="flex h-[39.8px] bg-[#010309] text-white">
      <div className="flex h-full w-[48.4px] shrink-0 items-center justify-center">
        <Icon w={16} h={16}>
          <path d="M0 2.2L6.6 1.2V7.4H0ZM7.4 1L16 0V7.4H7.4ZM0 8.2H6.6V14.6L0 13.8ZM7.4 8.2H16V16L7.4 14.8Z" fill="#fff" stroke="none" />
        </Icon>
      </div>
      <div className="flex h-full w-[343.6px] shrink-0 items-center bg-[#333333]">
        <Icon w={21} h={22} className="ml-[9.1px]">
          <circle cx={10.5} cy={11} r={9.1} stroke="#fff" strokeWidth={3} />
        </Icon>
        <T w={127.4} className="ml-[6.1px] pt-[1px] text-[15px] leading-[20px] text-[#a0a0a0]">Type here to search</T>
        <Icon w={10.3} h={16} className="ml-[155px] text-[#bbb]">
          <rect x={2.6} y={0.5} width={5.2} height={10.5} rx={2.4} />
          <path d="M.5 8.5V11Q.8 13 5.2 13.2Q9.6 13 9.8 11V8.5M5.2 13.2V15.6M2.6 15.6H7.8" />
        </Icon>
      </div>
      <Icon w={19.7} h={15} className="ml-[14.3px] mt-[12.6px]">
        <path d="M4 .6H15.7V13.8H4ZM2.2 2.4H.5V12.2H2.2M17.5 2.4H19.2V12.2H17.5" stroke="#fff" />
      </Icon>
      <TaskButton className="ml-[21px] w-[39.7px]" open>
        <Icon w={20} h={24} className="mt-[1px]">
          <path d="M.3 9.6C1.2 3.6 5 .4 10 .4C16.4 .4 19.8 5.2 19.8 10.6V13H6.4C6.6 16.4 9.6 17.8 12.8 17.8C15 17.8 17 17.2 18.7 16.2V20.6C16.8 21.7 14.2 22.2 11.6 22.2C5.4 22.2 1.6 18.8 1.6 13.6C1.6 10.4 3.4 7.8 6 6.2C3.6 6.6 1.5 8 .3 9.6ZM6.6 9.2H13.8C13.8 6.6 12.6 5.2 10.4 5.2C8.2 5.2 6.9 6.8 6.6 9.2Z" fill="#0a7bdc" stroke="none" />
        </Icon>
      </TaskButton>
      <TaskButton className="ml-[9.3px] w-[40px]" open>
        <Icon w={22} h={20} className="mt-[3px]">
          <g stroke="none">
            <path d="M0 0H9V1.2H22V17.2H0Z" fill="#f8dc7c" />
            <path d="M10 1.2H22V2.2H10Z" fill="#b79f55" />
            <path d="M4.6 10.2H18.4V18.2H14.4V13.4H8.6V18.2H4.6Z" fill="#35a9e1" />
          </g>
        </Icon>
      </TaskButton>
      <TaskButton className="ml-[9px] w-[40px]">
        <Icon w={23} h={23.5}>
          <path d="M8 6V3.8Q8.4 .7 11.5 .6Q14.6 .7 15 3.8V6M10 6V3.5M13.2 6V3.5" stroke="#fff" strokeWidth={0.8} />
          <g stroke="none">
            <path d="M0 6H23V22.4Q23 23.2 22 23.2H1Q0 23.2 0 22.4Z" fill="#fff" />
            <path d="M6 8.8H11V13.8H6Z" fill="#f04b23" />
            <path d="M12.2 8.8H17.2V13.8H12.2Z" fill="#7ab51d" />
            <path d="M6 15H11V20H6Z" fill="#00a2ec" />
            <path d="M12.2 15H17.2V20H12.2Z" fill="#fdb813" />
          </g>
        </Icon>
      </TaskButton>
      <TaskButton className="ml-[9.3px] w-[40px]">
        <Icon w={20.5} h={24}>
          <g stroke="none">
            <path d="M0 0H12L20.5 7V24H0Z" fill="#c8602a" />
            <path d="M1.8 1.2H11.2L18.6 8V22H1.8Z" fill="#fff" />
            <path d="M12 0H20.5V7Z" fill="#c4500f" />
            <path d="M5.5 10H15.5V12H5.5ZM5.5 13H15.5V19H5.5Z" fill="#c47a52" />
            <path d="M7 14H14V15H7ZM7 16H14V17H7Z" fill="#e8c4ae" />
          </g>
        </Icon>
      </TaskButton>
      <TaskButton className="ml-[9.3px] w-[40px]">
        <Icon w={22} h={20} className="mt-[2.4px]">
          <g stroke="none">
            <path d="M4 6Q8 8 12 5L18 0L18.6 8Q19 13 14.6 15Q9 16.4 5.6 13Q2.6 10 4 6Z" fill="#5f584d" />
            <ellipse cx={9} cy={8.4} rx={3.4} ry={3.2} fill="#b4b4b4" />
            <circle cx={9.6} cy={8.6} r={1.4} fill="#222" />
            <circle cx={1.6} cy={9.2} r={1.7} fill="#ddd" />
            <path d="M13.5 11.5L17 12.5L20.5 18.5L17.2 15.6Z" fill="#b98a5a" />
            <path d="M17.5 14.5L21 19L19 17.8Z" fill="#ddd" />
          </g>
        </Icon>
      </TaskButton>
      <TaskButton className="ml-[9.3px] w-[40px]">
        <Icon w={24.6} h={24}>
          <g stroke="none">
            <rect width={24.6} height={24} rx={2.4} fill="#ff8200" />
            <path d="M3.8 2.8H12Q21.2 4 21.2 12Q21.2 20 12 20.8H3.8Z" fill="#fff" />
            <path d="M6.4 6.2H16.2V9.4H11.2V10.6H15.6V13.4H11.2V14.8H16.2V18H6.4Z" fill="#2a78b5" />
          </g>
        </Icon>
      </TaskButton>
      <TaskButton className="ml-[8.6px] w-[40px]" open>
        <Icon w={26} h={25}>
          <Chrome />
          <g stroke="none">
            <ellipse cx={19} cy={18.3} rx={7.6} ry={7.4} fill="#b5e3ee" />
            <circle cx={19} cy={15.8} r={2.5} fill="#14808c" />
            <path d="M13.8 22.4V20.5Q14.4 18.6 19 18.6Q23.6 18.6 24.2 20.5V22.4Z" fill="#14808c" />
          </g>
        </Icon>
      </TaskButton>
      <TaskButton className="ml-[9px] w-[40px]" open>
        <Icon w={26} h={25}>
          <Chrome />
          <g stroke="none">
            <ellipse cx={19.4} cy={17.6} rx={7} ry={7.4} fill="#4f4560" />
            <path d="M16 12Q21 9.5 24.6 13L21 15.5Z" fill="#9a6a3c" />
            <path d="M14 18L20 14L22 19L17 23Z" fill="#47618c" />
            <path d="M20 20L25 16.5L23 23Z" fill="#7c3048" />
          </g>
        </Icon>
      </TaskButton>
      <TaskButton className="ml-[5px] w-[48.3px]" open active>
        <Icon w={21.5} h={23}>
          <rect width={21.5} height={22.6} fill="#f4f4f4" stroke="none" />
          <g transform="translate(1.6 1.2) scale(1.22 1.28)">
            <TableauMark />
          </g>
        </Icon>
      </TaskButton>
      <TaskButton className="ml-[4.7px] w-[40px]" open>
        <Icon w={22.5} h={22}>
          <g stroke="none">
            <path d="M3 0H22V22H0V3Z" fill="#b9cdee" />
            <path d="M3 0H22V1.4H3Z" fill="#4a78b8" />
            <path d="M19 1.4H22V12H19Z" fill="#6f93d0" />
            <path d="M2 14H22V20.6H2Z" fill="#eef2fb" />
            <path d="M0 20.8H22V22H0Z" fill="#2a4f94" />
          </g>
          <path d="M4.5 4.5L7.5 14.5L10.5 5.5L13.3 14.5L16.4 4.5" stroke="#1c4fb4" strokeWidth={3} />
        </Icon>
      </TaskButton>
      <Icon w={12.3} h={8} className="ml-[224px] mt-[16px]">
        <path d="M.6 7L6.1 .8L11.6 7" stroke="#fff" />
      </Icon>
      <Icon w={17} h={14} className="ml-[9.2px] mt-[13.6px]">
        <path d="M3.6 1.2H16V9.8H5.2V4.4M.5 .8H3.8V4.2H.5ZM2.2 4.2V7.5M10.4 9.8V12.6M6 12.8H14.6" stroke="#fff" strokeWidth={1.1} />
      </Icon>
      <Icon w={17.4} h={14} className="ml-[6.2px] mt-[13.2px]">
        <path d="M.6 4.8H2.8L5.8 1.2V12.8L2.8 9.2H.6ZM8.2 4.6Q10 7 8.2 9.4M10.8 2.6Q14 7 10.8 11.4M13.4 .8Q18 7 13.4 13.2" stroke="#fff" />
      </Icon>
      <Icon w={23.5} h={13} className="ml-[6.8px] mt-[13px]">
        <rect x={0.6} y={0.6} width={22.3} height={11.8} stroke="#fff" strokeWidth={1.2} />
        <path d="M3.4 3.4H20.4M3.4 6H20.4" stroke="#fff" strokeDasharray="1.5 1" />
        <path d="M3.4 9.2H5M6.6 9.2H17M18.6 9.2H20.4" stroke="#fff" />
      </Icon>
      <div className="ml-[11px] flex w-[51px] flex-col items-center text-[12px] leading-[17.6px]">
        <T w={41.6} className="mt-[1.6px]">4:16 PM</T>
        <T w={51}>4/13/2023</T>
      </div>
      <Icon w={24} h={25} className="ml-[18.9px] mt-[11.8px]">
        <path d="M0 0H16.6V10.6H10.5L7.5 14L7 10.6H0Z" fill="#fff" stroke="none" />
        <path d="M3 3.2H13.6M3 5.6H13.6M3 8H9.5" stroke="#010309" strokeWidth={0.8} />
        <ellipse cx={15.3} cy={16} rx={7.8} ry={7.8} fill="#2b2b2b" stroke="#777" strokeWidth={0.9} />
        <text x={15.3} y={20} fontSize={11.5} textAnchor="middle" fill="#fff" stroke="none">1</text>
      </Icon>
      <div className="ml-[12.2px] h-full w-px bg-[#666]" />
    </div>
  );
}

export default function App() {
  return (
    <div className="h-[3300px] w-[2550px] overflow-hidden bg-white pl-[300px] font-['Open_Sans',sans-serif]">
      <div className="flex h-[620px] items-start pt-[512px] font-['Lato',sans-serif] text-[41px] leading-[56px] text-black [font-variant-ligatures:none]">
        <T w={208}>Activity 1.7</T>
      </div>
      <div className="h-[2170px] w-[1950px]">
        <div className="flex h-[768px] w-[1366px] origin-top-left scale-x-[1.4275] scale-y-[2.8255] flex-col overflow-hidden">
          <TitleBar />
          <MenuBar />
          <Toolbar />
          <div className="flex h-[593.8px] shrink-0 bg-[#f4f4f4]">
            <Sidebar />
            <Shelves />
            <div className="ml-[7px] w-[983.9px]">
              <ColumnsRows />
              <div className="flex items-start">
                <Chart />
                <Legend />
              </div>
            </div>
          </div>
          <SheetTabs />
          <StatusBar />
          <Taskbar />
        </div>
      </div>
    </div>
  );
}
